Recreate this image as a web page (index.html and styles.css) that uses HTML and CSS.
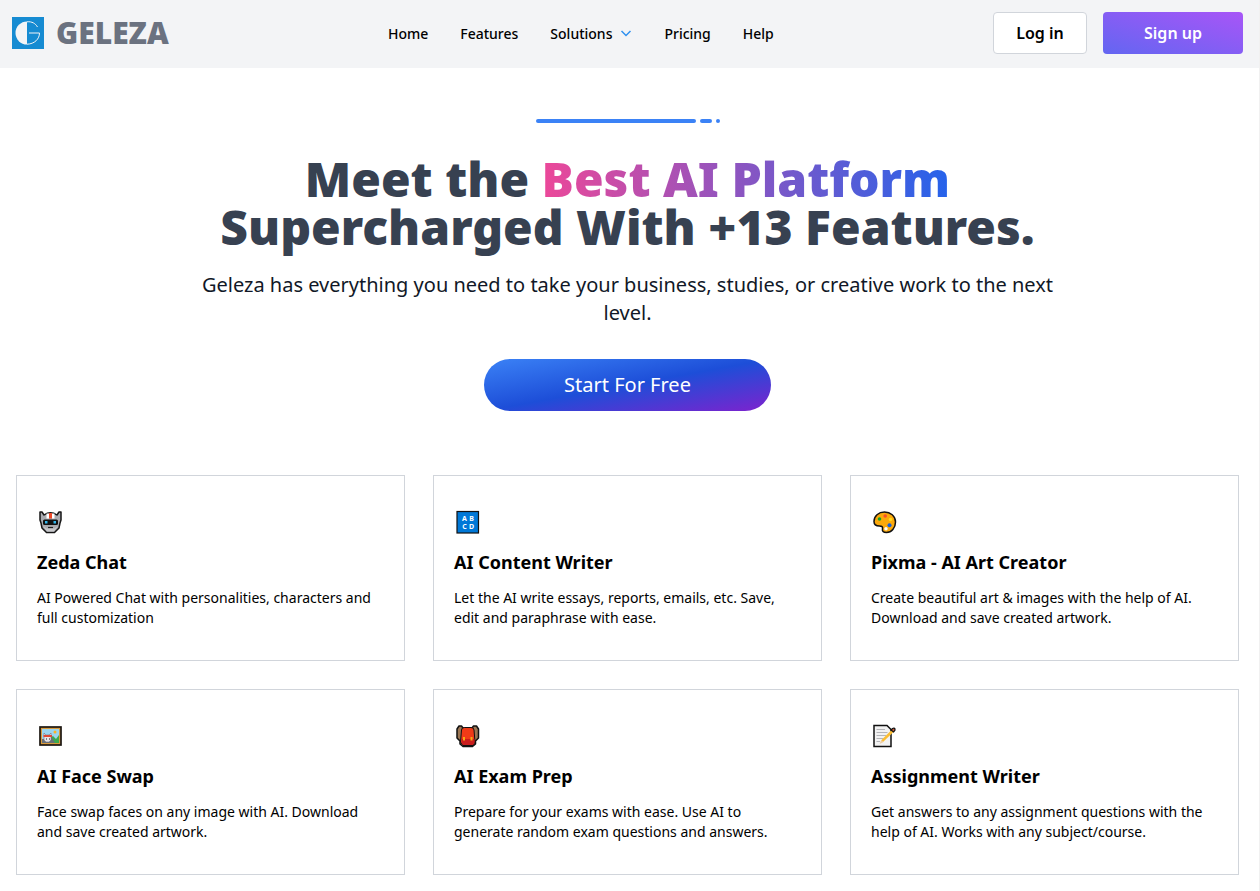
FILE: index.html
```
<!DOCTYPE html>
<html lang="en">
<head>
    <meta charset="UTF-8">
    <meta name="viewport" content="width=device-width, initial-scale=1.0">
    <title>Geleza</title>
    <link rel="stylesheet" href="styles.css">
</head>
<body>

    <header class="header">
        <a class="brand" href="#">
            <svg class="logo" viewBox="0 0 32 32" aria-hidden="true">
                <rect width="32" height="32" fill="#168bd2"/>
                <path d="M15 4.5A11.5 11.5 0 0 0 15 27.500Z" fill="#f3f4f6"/>
                <path d="M15 4.800C20 4.300 23.500 6.500 25.500 10M17 16H27.500C27.500 22 22.500 27 15 27.200" fill="none" stroke="#f3f4f6" stroke-width="1"/>
            </svg>
            <span class="brand-name">GELEZA</span>
        </a>
        <nav class="nav">
            <a href="#">Home</a>
            <a href="#">Features</a>
            <a href="#" class="dropdown">Solutions
                <svg class="chevron" viewBox="0 0 12 12" aria-hidden="true"><path d="M1.500 3 6 7.500 10.500 3" fill="none" stroke="#3091f0" stroke-width="1.500"/></svg>
            </a>
            <a href="#">Pricing</a>
            <a href="#">Help</a>
        </nav>
        <div class="actions">
            <button class="btn login">Log in</button>
            <button class="btn signup">Sign up</button>
        </div>
    </header>

    <main class="main">
        <section class="hero">
            <div class="dashes">
                <span class="dash long"></span>
                <span class="dash short"></span>
                <span class="dash dot"></span>
            </div>
            <h1>Meet the <span class="highlight">Best AI Platform</span><br>Supercharged With +13 Features.</h1>
            <p>Geleza has everything you need to take your business, studies, or creative work to the next level.</p>
            <button class="start">Start For Free</button>
        </section>

        <section class="cards">
            <article class="card">
                <!-- robot -->
                <svg class="icon" viewBox="0 0 28 28" aria-hidden="true">
                    <path d="M3 4 5 4l2 3Q13.500 2.500 20 7L22 4h2v8l-1 3-1 5-4.500 4.500h-8L5 20 4 15 3 12Z" fill="#a9abb0" stroke="#161616" stroke-width="1.500" stroke-linejoin="round"/>
                    <path d="M6 18 9.500 20.500h8L21 18l-4 5.500h-7Z" fill="#c9c9cc"/>
                    <path d="M9.500 5.500h2.500v5H9.500zM15 5.500h2.500v5H15z" fill="#fff"/>
                    <path d="M12 5h3v5.500h-3z" fill="#ee4b2b"/>
                    <rect x="6" y="11.500" width="15" height="5.500" rx="1.500" fill="#111"/>
                    <path d="M8 13h2.500v2.500H8zM16.500 13H19v2.500h-2.500z" fill="#32b7ee"/>
                    <path d="M11 19.500h5" stroke="#222" stroke-width="1.200"/>
                </svg>
                <h2>Zeda Chat</h2>
                <p>AI Powered Chat with personalities, characters and full customization</p>
            </article>

            <article class="card">
                <!-- letters -->
                <svg class="icon" viewBox="0 0 28 28" aria-hidden="true">
                    <rect x="3" y="3.500" width="21.500" height="21.500" fill="#0078d7" stroke="#111" stroke-width="1.200"/>
                    <g class="glyphs">
                        <text x="10.500" y="13">A</text>
                        <text x="17.500" y="13">B</text>
                        <text x="10.500" y="21">C</text>
                        <text x="17.500" y="21">D</text>
                    </g>
                </svg>
                <h2>AI Content Writer</h2>
                <p>Let the AI write essays, reports, emails, etc. Save, edit and paraphrase with ease.</p>
            </article>

            <article class="card">
                <!-- palette -->
                <svg class="icon" viewBox="0 0 28 28" aria-hidden="true">
                    <path d="M3 13.500C3 8 7.500 4 13.500 4S24.500 8 24.500 14s-4 10.500-9 10.500c-3.500 0-4.500-1.500-4-3.800.4-1.900-.5-2.700-3-2.700C5.500 18 3 16.500 3 13.500Z" fill="#fca90b" stroke="#111" stroke-width="1.500"/>
                    <circle cx="8.500" cy="11" r="1.800" fill="#16a329"/>
                    <circle cx="14.200" cy="8" r="1.800" fill="#f5502b"/>
                    <circle cx="19.500" cy="11.500" r="1.800" fill="#ffd91c"/>
                    <circle cx="18.500" cy="17.200" r="2" fill="#1760df"/>
                    <circle cx="15" cy="20.800" r="1.700" fill="#fff"/>
                </svg>
                <h2>Pixma - AI Art Creator</h2>
                <p>Create beautiful art &amp; images with the help of AI. Download and save created artwork.</p>
            </article>

            <article class="card">
                <!-- framed picture -->
                <svg class="icon" viewBox="0 0 28 28" aria-hidden="true">
                    <rect x="3" y="5" width="21" height="18" fill="#d99b3d" stroke="#1c1712" stroke-width="1.700"/>
                    <rect x="5" y="7" width="17" height="14" fill="#9cd5ef"/>
                    <circle cx="18" cy="10" r="1.500" fill="#ffb020"/>
                    <path d="M13 21v-5l3-2 3 3 3-4v8Z" fill="#3daa4d"/>
                    <path d="M5 17h4l5-3 4 7H5Z" fill="#697078"/>
                    <path d="m7 11 2 2h3l2-2v7l-2 2H9l-2-2Z" fill="#e8e5e8" stroke="#71717c" stroke-width=".6"/>
                    <path d="M6.500 13h8.500v2H6.500Z" fill="#df4936"/>
                    <path d="M9 17h1M12 17h1" stroke="#222"/>
                </svg>
                <h2>AI Face Swap</h2>
                <p>Face swap faces on any image with AI. Download and save created artwork.</p>
            </article>

            <article class="card">
                <!-- backpack -->
                <svg class="icon" viewBox="0 0 28 28" aria-hidden="true">
                    <path d="M7.500 4H5L3 7v9l3 3v3l3 2.500h9.500l3-2.500v-3l3-3V7l-2-3h-3L18 6H9Z" fill="#9b7653" stroke="#111" stroke-width="1.500" stroke-linejoin="round"/>
                    <path d="M7.500 8q0-2.500 3-2.500h6.500q3 0 3 2.500l1 12-2 3.500H9L6.500 20Z" fill="#f03a17" stroke="#111"/>
                    <path d="M7.500 17h13v4L19 23H9l-1.500-2Z" fill="#c91d1d"/>
                    <path d="M9 15h2v3.500H9zM16.500 15h2v3.500h-2z" fill="#f7a916"/>
                </svg>
                <h2>AI Exam Prep</h2>
                <p>Prepare for your exams with ease. Use AI to generate random exam questions and answers.</p>
            </article>

            <article class="card">
                <!-- memo -->
                <svg class="icon" viewBox="0 0 28 28" aria-hidden="true">
                    <path d="M3 3.500h13l4 4v17H3Z" fill="#f2f2f2" stroke="#111" stroke-width="1.500"/>
                    <path d="M5.500 7.500H14M5.500 10.500h11M5.500 13.500H15M5.500 16.500h7M5.500 19.500H9" stroke="#b4b4b8"/>
                    <path d="m9.500 20.500 1-2.500L20.500 8l2 2L12 20Z" fill="#fbbd32"/>
                    <path d="m8.500 22 2-4 2 2Z" fill="#edcca6"/>
                    <path d="m20 8 1.500-1.500q2-.8 2.500.5T22.500 10Z" fill="#d25b3b" stroke="#111" stroke-width="1.300"/>
                </svg>
                <h2>Assignment Writer</h2>
                <p>Get answers to any assignment questions with the help of AI. Works with any subject/course.</p>
            </article>
        </section>
    </main>

</body>
</html>
```
FILE: styles.css
```
* {
    box-sizing: border-box;
}
body {
    margin: 0;
    border-right: 1px solid #f1f1f1;
    font-family: "Noto Sans", sans-serif;
    background-color: #fff;
    color: #000;
}
a {
    color: inherit;
    text-decoration: none;
}
button {
    font-family: inherit;
    cursor: pointer;
}
h1, h2, p {
    margin: 0;
}
.header {
    display: flex;
    align-items: center;
    justify-content: space-between;
    padding: 12px 16px 14px 12px;
    background-color: #f3f4f6;
}
.brand {
    display: flex;
    align-items: center;
    gap: 12px;
}
.logo {
    width: 32px;
    height: 32px;
}
.brand-name {
    font-size: 30px;
    line-height: 36px;
    font-weight: 900;
    color: #6b7280;
}
.nav {
    display: flex;
    gap: 32px;
    padding-top: 2px;
    font-size: 14px;
    line-height: 20px;
    font-weight: 500;
}
.dropdown {
    display: flex;
    align-items: center;
    gap: 8px;
}
.chevron {
    width: 12px;
    height: 12px;
}
.actions {
    display: flex;
    gap: 16px;
}
.btn {
    height: 42px;
    border-radius: 4px;
    font-size: 16px;
    font-weight: 600;
}
.login {
    width: 94px;
    border: 1px solid #d1d5db;
    background-color: #fff;
    color: #000;
}
.signup {
    width: 140px;
    border: none;
    background: linear-gradient(to top right, #6366f1, #a855f7);
    color: #fff;
}
.main {
    padding: 51px 20px 16px 16px;
}
.hero {
    display: flex;
    flex-direction: column;
    align-items: center;
    text-align: center;
}
.dashes {
    display: flex;
    gap: 4px;
    margin-bottom: 32px;
}
.dash {
    height: 4px;
    border-radius: 2px;
    background-color: #3b82f6;
}
.long {
    width: 160px;
}
.short {
    width: 12px;
}
.dot {
    width: 4px;
}
.hero h1 {
    font-size: 48px;
    line-height: 48px;
    font-weight: 900;
    color: #374151;
}
.highlight {
    background: linear-gradient(to right, #ec4899, #2563eb);
    -webkit-background-clip: text;
    background-clip: text;
    color: transparent;
}
.hero p {
    max-width: 896px;
    margin-top: 20px;
    font-size: 20px;
    line-height: 28px;
    color: #111827;
}
.start {
    margin-top: 32px;
    padding: 12px 80px;
    border: none;
    border-radius: 26px;
    font-size: 20px;
    line-height: 28px;
    background: linear-gradient(to bottom right, #3b82f6, #1d4ed8, #7e22ce);
    color: #fff;
}
.cards {
    display: grid;
    grid-template-columns: repeat(3, 1fr);
    gap: 28px;
    margin-top: 64px;
}
.card {
    padding: 32px 20px;
    border: 1px solid #d1d5db;
}
.icon {
    display: block;
    width: 28px;
    height: 28px;
}
.glyphs {
    font-size: 7px;
    font-weight: 700;
    fill: #fff;
    text-anchor: middle;
}
.card h2 {
    margin: 12px 0;
    font-size: 18px;
    line-height: 28px;
    font-weight: 700;
}
.card p {
    font-size: 14px;
    line-height: 20px;
}
@media (max-width: 900px) {
    .cards {
        grid-template-columns: 1fr;
    }
    .header {
        flex-wrap: wrap;
        gap: 12px;
    }
}
```
